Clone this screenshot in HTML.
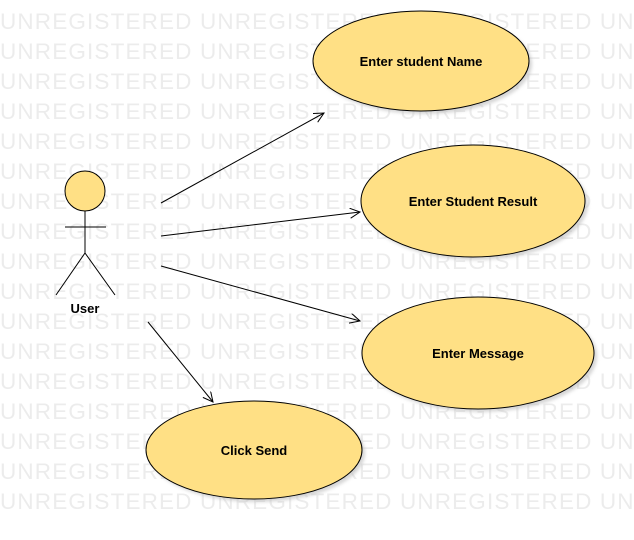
<!DOCTYPE html>
<html><head><style>body{margin:0;background:#fff}svg{display:block}</style></head><body>
<svg width="634" height="540" xmlns="http://www.w3.org/2000/svg">
<defs><marker id="a" markerWidth="12" markerHeight="12" refX="10" refY="5" orient="auto" markerUnits="userSpaceOnUse"><path d="M0,0 L10,5 L0,10" fill="none" stroke="#000" stroke-width="1"/></marker>
<filter id="s"><feGaussianBlur stdDeviation="1.5"/></filter></defs>
<g font-family="Liberation Sans, sans-serif" font-size="22.5" letter-spacing="1.15" fill="#ececec">
<text x="0" y="29">UNREGISTERED UNREGISTERED UNREGISTERED UNREGISTERED</text>
<text x="0" y="59">UNREGISTERED UNREGISTERED UNREGISTERED UNREGISTERED</text>
<text x="0" y="89">UNREGISTERED UNREGISTERED UNREGISTERED UNREGISTERED</text>
<text x="0" y="119">UNREGISTERED UNREGISTERED UNREGISTERED UNREGISTERED</text>
<text x="0" y="149">UNREGISTERED UNREGISTERED UNREGISTERED UNREGISTERED</text>
<text x="0" y="179">UNREGISTERED UNREGISTERED UNREGISTERED UNREGISTERED</text>
<text x="0" y="209">UNREGISTERED UNREGISTERED UNREGISTERED UNREGISTERED</text>
<text x="0" y="239">UNREGISTERED UNREGISTERED UNREGISTERED UNREGISTERED</text>
<text x="0" y="269">UNREGISTERED UNREGISTERED UNREGISTERED UNREGISTERED</text>
<text x="0" y="299">UNREGISTERED UNREGISTERED UNREGISTERED UNREGISTERED</text>
<text x="0" y="329">UNREGISTERED UNREGISTERED UNREGISTERED UNREGISTERED</text>
<text x="0" y="359">UNREGISTERED UNREGISTERED UNREGISTERED UNREGISTERED</text>
<text x="0" y="389">UNREGISTERED UNREGISTERED UNREGISTERED UNREGISTERED</text>
<text x="0" y="419">UNREGISTERED UNREGISTERED UNREGISTERED UNREGISTERED</text>
<text x="0" y="449">UNREGISTERED UNREGISTERED UNREGISTERED UNREGISTERED</text>
<text x="0" y="479">UNREGISTERED UNREGISTERED UNREGISTERED UNREGISTERED</text>
<text x="0" y="509">UNREGISTERED UNREGISTERED UNREGISTERED UNREGISTERED</text>
</g>
<g fill="#bbb" filter="url(#s)" opacity="0.6">
<ellipse cx="424" cy="64" rx="108" ry="50"/><ellipse cx="476" cy="204" rx="112" ry="56"/>
<ellipse cx="481" cy="356" rx="116" ry="56"/><ellipse cx="257" cy="453" rx="108" ry="49"/>
</g>
<g fill="#ffe085" stroke="#000" stroke-width="1">
<ellipse cx="421" cy="61" rx="108" ry="50"/><ellipse cx="473" cy="201" rx="112" ry="56"/>
<ellipse cx="478" cy="353" rx="116" ry="56"/><ellipse cx="254" cy="450" rx="108" ry="49"/>
<circle cx="85" cy="191" r="20"/>
</g>
<g stroke="#000" stroke-width="1" fill="none">
<path d="M85 211V253M65 227H106M85 253L56 295M85 253L115 295"/>
<path d="M161 203L324 113" marker-end="url(#a)"/>
<path d="M161 236L360 212" marker-end="url(#a)"/>
<path d="M161 266L360 321" marker-end="url(#a)"/>
<path d="M148 322L213 402" marker-end="url(#a)"/>
</g>
<g font-family="Liberation Sans, sans-serif" font-size="13" font-weight="bold" text-anchor="middle" fill="#000">
<text x="421" y="66">Enter student Name</text>
<text x="473" y="206">Enter Student Result</text>
<text x="478" y="358">Enter Message</text>
<text x="254" y="455">Click Send</text>
<text x="85" y="313">User</text>
</g>
</svg>
</body></html>
